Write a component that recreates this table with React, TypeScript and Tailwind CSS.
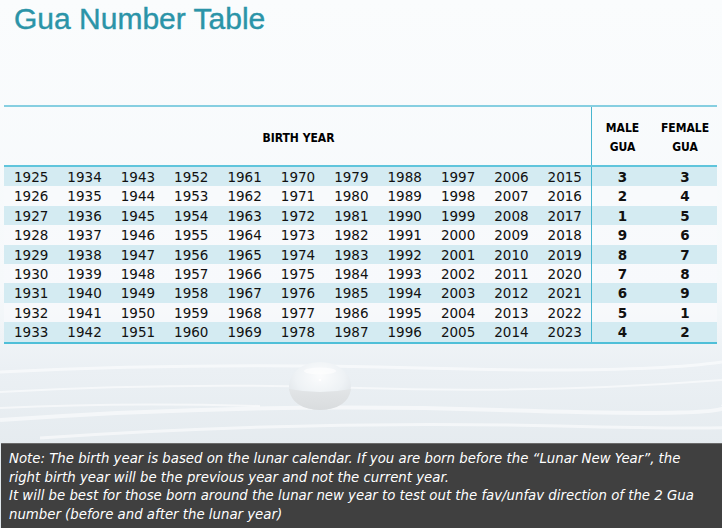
import React from "react";

const rows: { years: number[]; male: number; female: number }[] = [
  { start: 1925, male: 3, female: 3 },
  { start: 1926, male: 2, female: 4 },
  { start: 1927, male: 1, female: 5 },
  { start: 1928, male: 9, female: 6 },
  { start: 1929, male: 8, female: 7 },
  { start: 1930, male: 7, female: 8 },
  { start: 1931, male: 6, female: 9 },
  { start: 1932, male: 5, female: 1 },
  { start: 1933, male: 4, female: 2 },
].map((r) => ({
  years: Array.from({ length: 11 }, (_, i) => r.start + i * 9),
  male: r.male,
  female: r.female,
}));

function Backdrop() {
  return (
    <svg
      className="absolute inset-0 pointer-events-none"
      width="722"
      height="528"
      viewBox="0 0 722 528"
    >
      <defs>
        <linearGradient id="bg" x1="0" y1="0" x2="0" y2="1">
          <stop offset="0" stopColor="#fafcfd" />
          <stop offset="0.55" stopColor="#f6f9fb" />
          <stop offset="0.7" stopColor="#ebf0f4" />
          <stop offset="0.85" stopColor="#e5ebef" />
          <stop offset="1" stopColor="#dfe6eb" />
        </linearGradient>
        <radialGradient id="drop" cx="0.5" cy="0.3" r="0.65">
          <stop offset="0" stopColor="#fbfcfd" />
          <stop offset="0.6" stopColor="#eef2f5" />
          <stop offset="1" stopColor="#dfe4e8" />
        </radialGradient>
        <linearGradient id="dropBottom" x1="0" y1="0" x2="0" y2="1">
          <stop offset="0" stopColor="#e2e5e7" />
          <stop offset="1" stopColor="#d9dcde" />
        </linearGradient>
      </defs>
      <rect width="722" height="528" fill="url(#bg)" />
      <g fill="none" stroke="#ffffff" strokeOpacity="0.55">
        <path d="M0 372 Q 200 362 420 368 T 722 362" strokeWidth="3" />
        <path d="M0 392 Q 180 382 360 388 T 722 380" strokeWidth="2" />
        <path d="M0 420 Q 250 402 500 410 T 722 404" strokeWidth="4" />
        <path d="M40 438 Q 300 420 560 426 T 722 420" strokeWidth="3" />
        <path d="M0 408 Q 120 402 260 406" strokeWidth="2" />
      </g>
      <ellipse cx="320" cy="386" rx="31" ry="24" fill="url(#drop)" />
      <path d="M289 389 Q 320 395 351 389 Q 348 409 320 410 Q 292 409 289 389 Z" fill="url(#dropBottom)" />
      <ellipse cx="320" cy="371" rx="16" ry="3.5" fill="#ffffff" fillOpacity="0.6" />
      <circle cx="320" cy="380" r="1.3" fill="#ffffff" />
    </svg>
  );
}

export default function App() {
  return (
    <div
      className="relative w-[722px] h-[528px] overflow-hidden flex flex-col"
      style={{ fontFamily: '"DejaVu Sans", sans-serif' }}
    >
      <Backdrop />
      <div className="relative flex flex-col h-full">
        <div className="h-[105px] pl-[14px] pt-[1px]">
          <h1
            className="text-[30px] leading-[36px] text-[#2b94a8]"
            style={{ fontFamily: '"Liberation Sans", Arial, sans-serif', WebkitTextStroke: "0.4px #2b94a8" }}
          >
            Gua Number Table
          </h1>
        </div>

        <div className="ml-[4px] w-[713px] border-t-2 border-b-2 border-t-[#86cfe1] border-b-[#4fbfd8]">
          <div
            className="flex h-[60px] border-b-2 border-[#5fc5dc] font-bold text-[12px] text-black"
            style={{ fontFamily: '"DejaVu Sans Condensed", "DejaVu Sans", sans-serif' }}
          >
            <div className="w-[587px] flex items-center justify-center pl-[2px] pt-[4px]">BIRTH YEAR</div>
            <div className="w-[62px] border-l border-[#48b6cf] flex flex-col items-center justify-center leading-[19px] pt-[4px]">
              <span>MALE</span>
              <span>GUA</span>
            </div>
            <div className="w-[64px] flex flex-col items-center justify-center leading-[19px] pt-[4px]">
              <span>FEMALE</span>
              <span>GUA</span>
            </div>
          </div>
          {rows.map((r, i) => (
            <div
              key={i}
              className={
                "flex h-[19.4px] items-center text-[13.5px] text-[#111] " +
                (i % 2 === 0 ? "bg-[#d4ebf2]" : "bg-[#f8fafc]/70")
              }
            >
              <div className="w-[587px] h-full flex">
                {r.years.map((y) => (
                  <div key={y} className="flex-1 flex items-center justify-center pl-[1px] pt-[1px]">
                    {y}
                  </div>
                ))}
              </div>
              <div className="w-[62px] h-full border-l border-[#48b6cf] flex items-center justify-center font-bold pt-[1px]">
                {r.male}
              </div>
              <div className="w-[64px] h-full flex items-center justify-center font-bold pt-[1px]">
                {r.female}
              </div>
            </div>
          ))}
        </div>

        <div className="flex-1" />

        <div
          className="h-[85px] ml-[1px] bg-[#404040] border-t border-[#6a6a6a] text-white italic text-[13.3px] leading-[18.7px] pl-[8px] pt-[6px] whitespace-nowrap"
          style={{ fontFamily: '"DejaVu Sans", sans-serif' }}
        >
          <div>Note: The birth year is based on the lunar calendar. If you are born before the “Lunar New Year”, the</div>
          <div>right birth year will be the previous year and not the current year.</div>
          <div>It will be best for those born around the lunar new year to test out the fav/unfav direction of the 2 Gua</div>
          <div>number (before and after the lunar year)</div>
        </div>
      </div>
    </div>
  );
}
